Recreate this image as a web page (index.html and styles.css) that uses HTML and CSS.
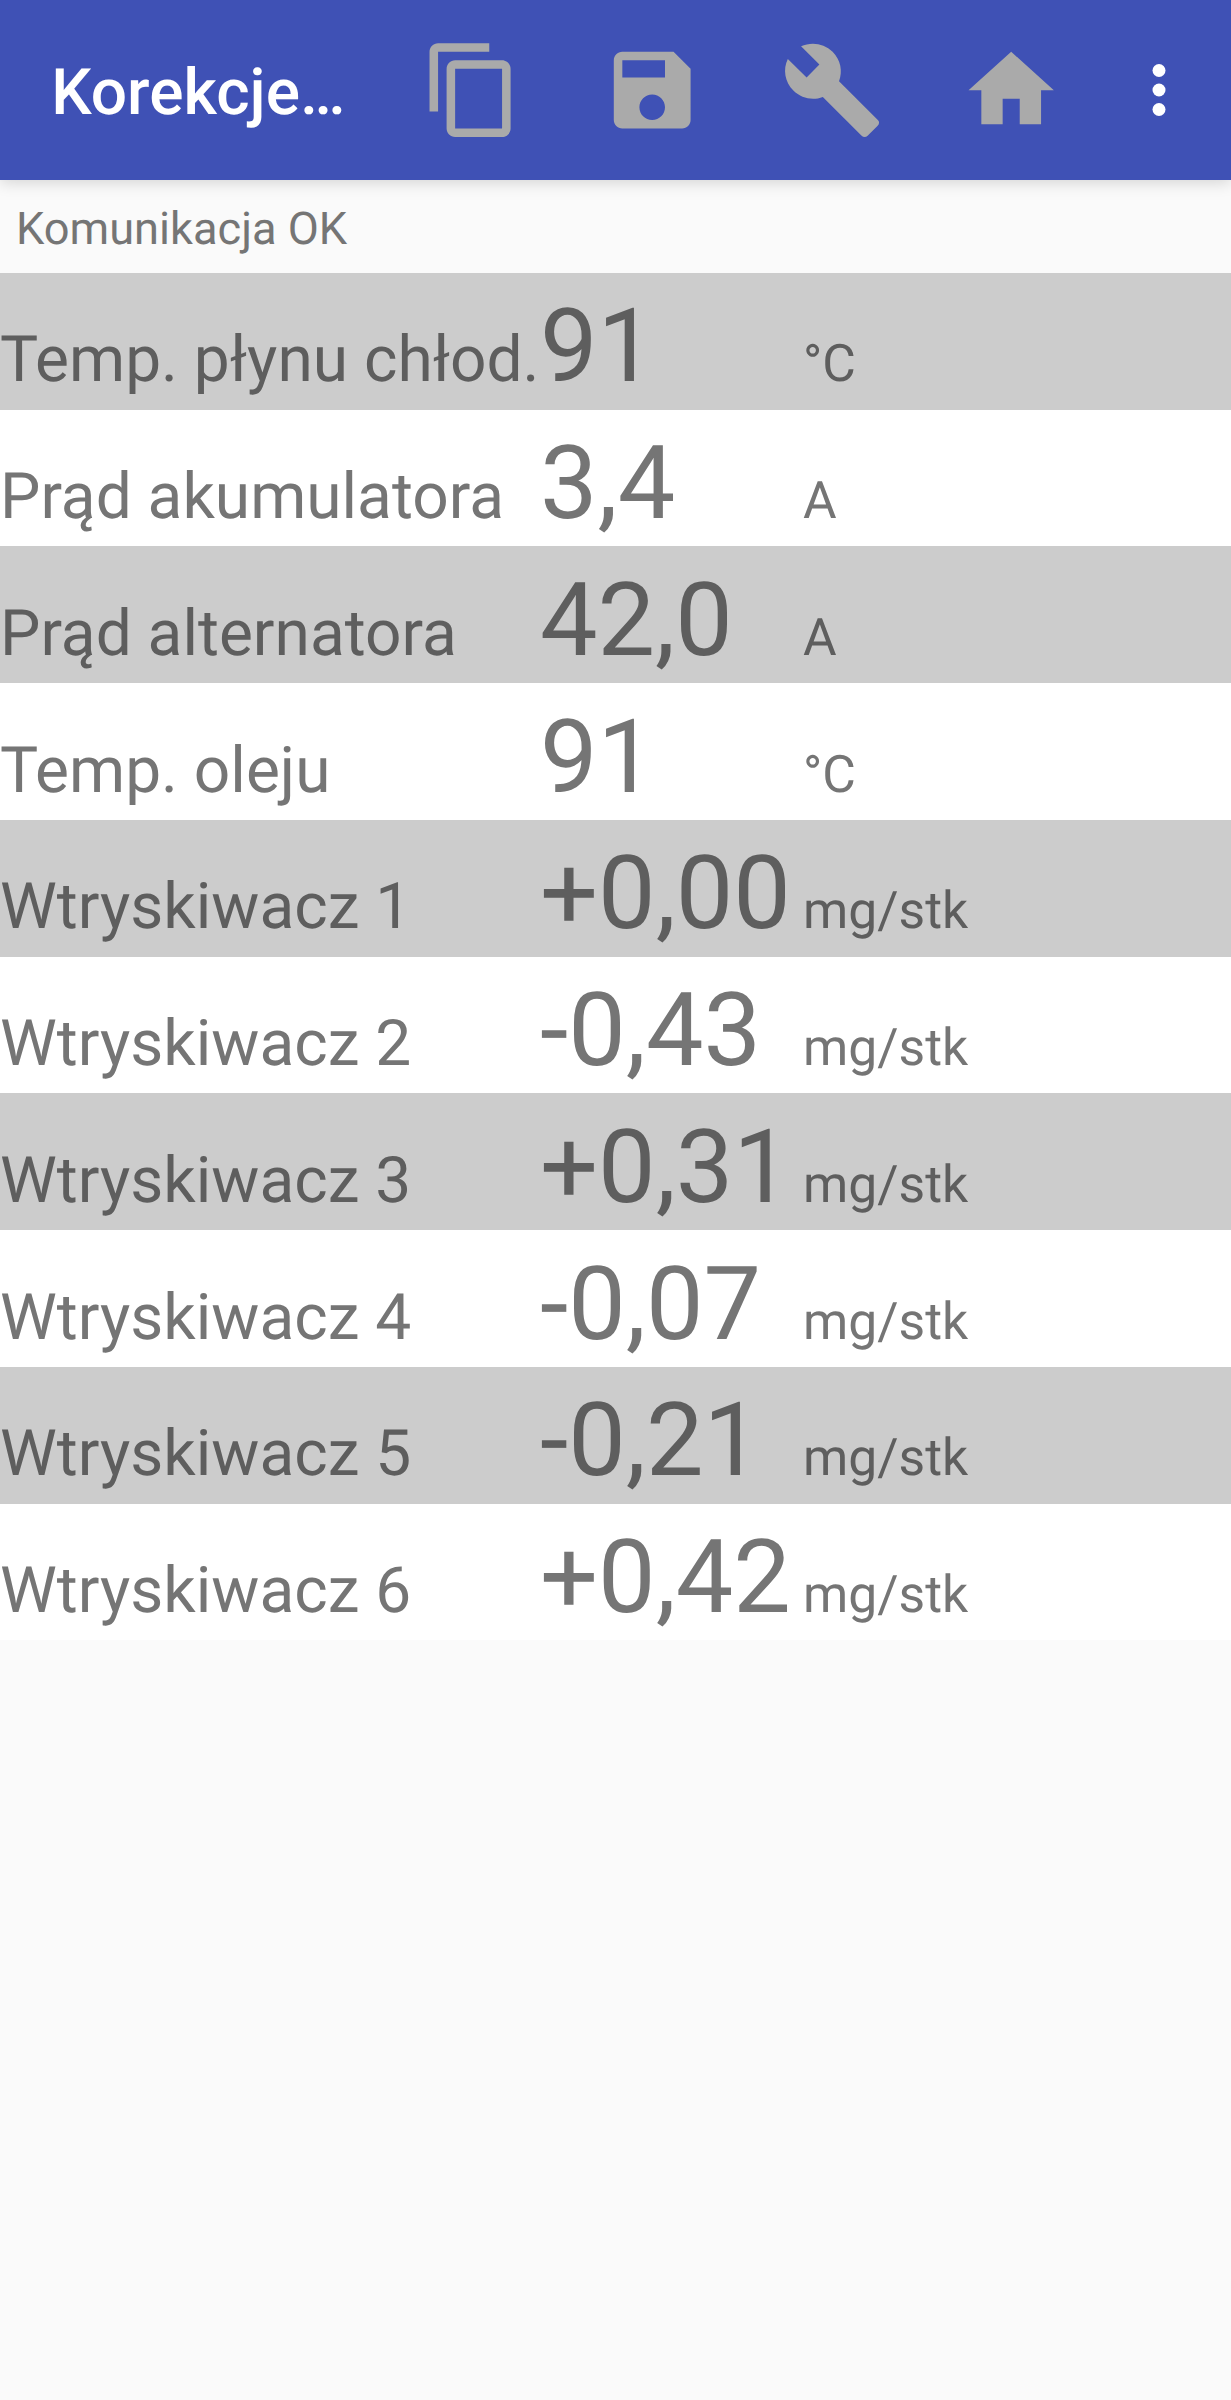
FILE: index.html
```html
<!DOCTYPE html>
<html lang="pl">
<head>
<meta charset="utf-8">
<title>Korekcje</title>
<link rel="stylesheet" href="styles.css">
</head>
<body>
<header class="toolbar">
  <h1 class="title">Korekcje…</h1>
  <nav class="actions">
    <svg class="icon" viewBox="0 0 24 24"><path d="M16 1H4c-1.1 0-2 .9-2 2v14h2V3h12V1zm3 4H8c-1.1 0-2 .9-2 2v14c0 1.1.9 2 2 2h11c1.1 0 2-.9 2-2V7c0-1.1-.9-2-2-2zm0 16H8V7h11v14z"/></svg>
    <svg class="icon" viewBox="0 0 24 24"><path d="M17 3H5c-1.11 0-2 .9-2 2v14c0 1.1.89 2 2 2h14c1.1 0 2-.9 2-2V7l-4-4zm-5 16c-1.66 0-3-1.34-3-3s1.34-3 3-3 3 1.34 3 3-1.34 3-3 3zm3-10H5V5h10v4z"/></svg>
    <svg class="icon" viewBox="0 0 24 24"><path d="M22.7 19l-9.1-9.1c.9-2.3.4-5-1.5-6.9-2-2-5-2.4-7.4-1.3L9 6 6 9 1.6 4.7C.4 7.1.9 10.1 2.9 12.1c1.9 1.9 4.6 2.4 6.9 1.5l9.1 9.1c.4.4 1 .4 1.4 0l2.3-2.3c.5-.4.5-1.1.1-1.4z"/></svg>
    <svg class="icon" viewBox="0 0 24 24"><path d="M10 20v-6h4v6h5v-8h3L12 3 2 12h3v8z"/></svg>
  </nav>
  <svg class="more" viewBox="0 0 24 24"><circle cx="12" cy="6" r="2"/><circle cx="12" cy="12" r="2"/><circle cx="12" cy="18" r="2"/></svg>
</header>
<p class="status">Komunikacja OK</p>
<main class="list">
  <div class="row"><span class="label">Temp. płynu chłod.</span><span class="value">91</span><span class="unit">°C</span></div>
  <div class="row"><span class="label">Prąd akumulatora</span><span class="value">3,4</span><span class="unit">A</span></div>
  <div class="row"><span class="label">Prąd alternatora</span><span class="value">42,0</span><span class="unit">A</span></div>
  <div class="row"><span class="label">Temp. oleju</span><span class="value">91</span><span class="unit">°C</span></div>
  <div class="row"><span class="label">Wtryskiwacz 1</span><span class="value">+0,00</span><span class="unit">mg/stk</span></div>
  <div class="row"><span class="label">Wtryskiwacz 2</span><span class="value">-0,43</span><span class="unit">mg/stk</span></div>
  <div class="row"><span class="label">Wtryskiwacz 3</span><span class="value">+0,31</span><span class="unit">mg/stk</span></div>
  <div class="row"><span class="label">Wtryskiwacz 4</span><span class="value">-0,07</span><span class="unit">mg/stk</span></div>
  <div class="row"><span class="label">Wtryskiwacz 5</span><span class="value">-0,21</span><span class="unit">mg/stk</span></div>
  <div class="row"><span class="label">Wtryskiwacz 6</span><span class="value">+0,42</span><span class="unit">mg/stk</span></div>
</main>
</body>
</html>
```
FILE: styles.css
```css
* { box-sizing: border-box; }
body {
  margin: 0;
  min-height: 2400px;
  background: #fafafa;
  color: #757575;
  font-family: Roboto, "Liberation Sans", sans-serif;
  text-rendering: geometricPrecision;
}
.toolbar {
  display: flex;
  align-items: center;
  height: 179.5px;
  padding-left: 51.2px;
  background: #3f51b5;
  box-shadow: 0 3px 14px rgba(0, 0, 0, .15);
}
.title {
  width: 370.3px;
  margin: 0;
  padding-top: 6px;
  font-size: 64px;
  font-weight: 500;
  line-height: 75px;
  color: #fff;
  white-space: nowrap;
}
.actions { display: flex; gap: 77.2px; }
.icon { width: 102.4px; height: 102.4px; fill: #aaa; }
.more { width: 78px; height: 78px; margin-left: 57.5px; fill: #fff; }
.status {
  height: 93.3px;
  margin: 0;
  padding: 23px 0 0 16px;
  font-size: 45.2px;
  line-height: 53px;
}
.row {
  display: grid;
  grid-template-columns: 540px 263px 1fr;
  align-items: baseline;
  height: 136.75px;
  padding-top: 13.5px;
  background: #fff;
  white-space: nowrap;
}
.row:nth-child(odd) { background: #ccc; color: #5e5e5e; }
.label { font-size: 64px; }
.value { font-size: 102.4px; line-height: 120px; }
.unit { font-size: 51.6px; }
```
